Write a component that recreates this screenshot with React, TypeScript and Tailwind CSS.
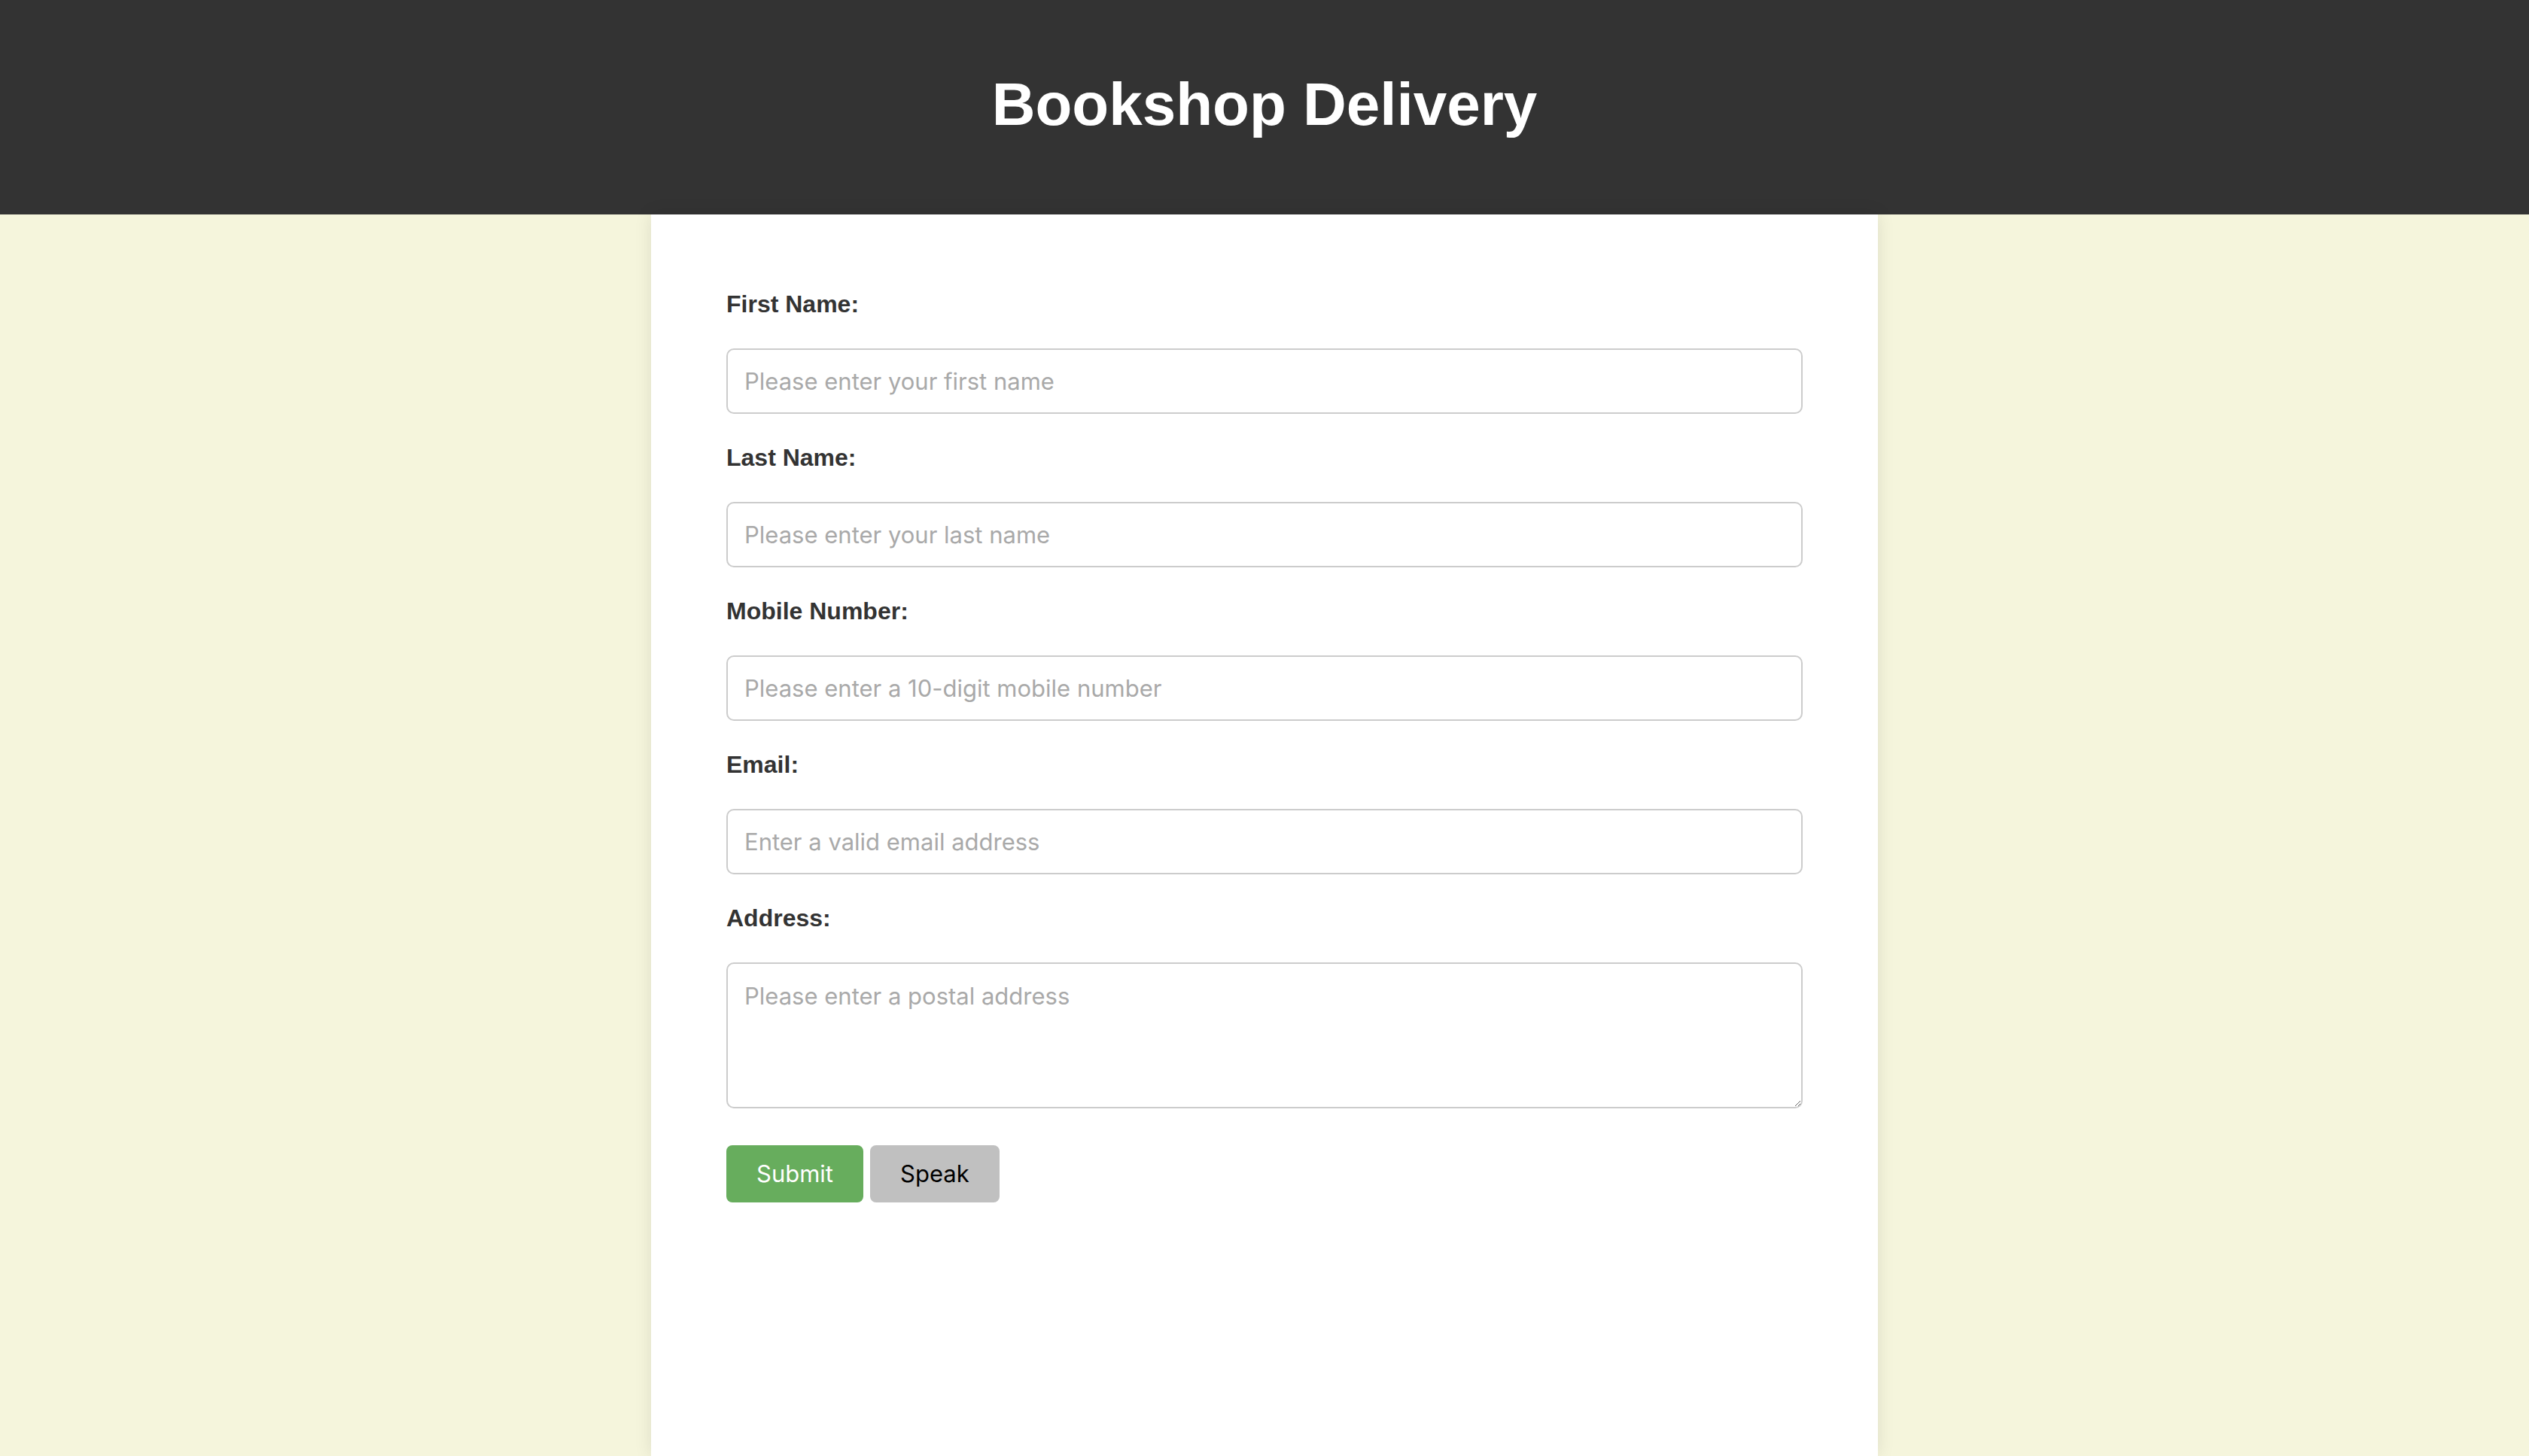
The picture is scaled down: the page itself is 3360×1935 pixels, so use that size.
import React from "react";

const fields = [
  { id: "firstName", label: "First Name:", placeholder: "Please enter your first name", type: "text" },
  { id: "lastName", label: "Last Name:", placeholder: "Please enter your last name", type: "text" },
  { id: "mobile", label: "Mobile Number:", placeholder: "Please enter a 10-digit mobile number", type: "tel" },
  { id: "email", label: "Email:", placeholder: "Enter a valid email address", type: "email" },
];

const labelClass =
  "block pt-[2px] text-[32px] leading-[37px] font-bold text-[#333333] mb-[40px] font-['Liberation_Sans',Arial,sans-serif]";

const inputClass =
  "block w-full rounded-[10px] border-2 border-[#cccccc] bg-white px-[22px] text-[31px] text-[#333333] outline-none placeholder:text-[#a9a9a9] font-['Inter','Noto_Sans',sans-serif]";

export default function App() {
  return (
    <div className="flex min-h-screen flex-col bg-[#f5f5dc]">
      <header className="bg-[#333333] pt-[93px] pb-[100px] text-center">
        <h1 className="text-[80px] leading-[92px] font-bold text-white font-['Liberation_Sans',Arial,sans-serif]">
          Bookshop Delivery
        </h1>
      </header>

      <main className="mx-auto w-[1630px] flex-1 bg-white px-[100px] pt-[99px] shadow-[0_0_22px_rgba(0,0,0,0.1)]">
        <form onSubmit={(e) => e.preventDefault()}>
          {fields.map((f) => (
            <div key={f.id}>
              <label htmlFor={f.id} className={labelClass}>
                {f.label}
              </label>
              <input id={f.id} type={f.type} placeholder={f.placeholder} className={`${inputClass} h-[87px] mb-[38px]`} />
            </div>
          ))}

          <label htmlFor="address" className={labelClass}>
            Address:
          </label>
          <textarea
            id="address"
            placeholder="Please enter a postal address"
            className={`${inputClass} h-[194px] pt-[24px] pb-[16px] leading-[38px] mb-[49px]`}
          />

          <div className="flex gap-[9px]">
            <button
              type="submit"
              className="h-[76px] rounded-[8px] bg-[#67ad5d] px-[40px] text-[31px] text-white font-['Inter','Noto_Sans',sans-serif]"
            >
              Submit
            </button>
            <button
              type="button"
              className="h-[76px] rounded-[8px] bg-[#c0c0c0] px-[40px] text-[31px] text-black font-['Inter','Noto_Sans',sans-serif]"
            >
              Speak
            </button>
          </div>
        </form>
      </main>
    </div>
  );
}
